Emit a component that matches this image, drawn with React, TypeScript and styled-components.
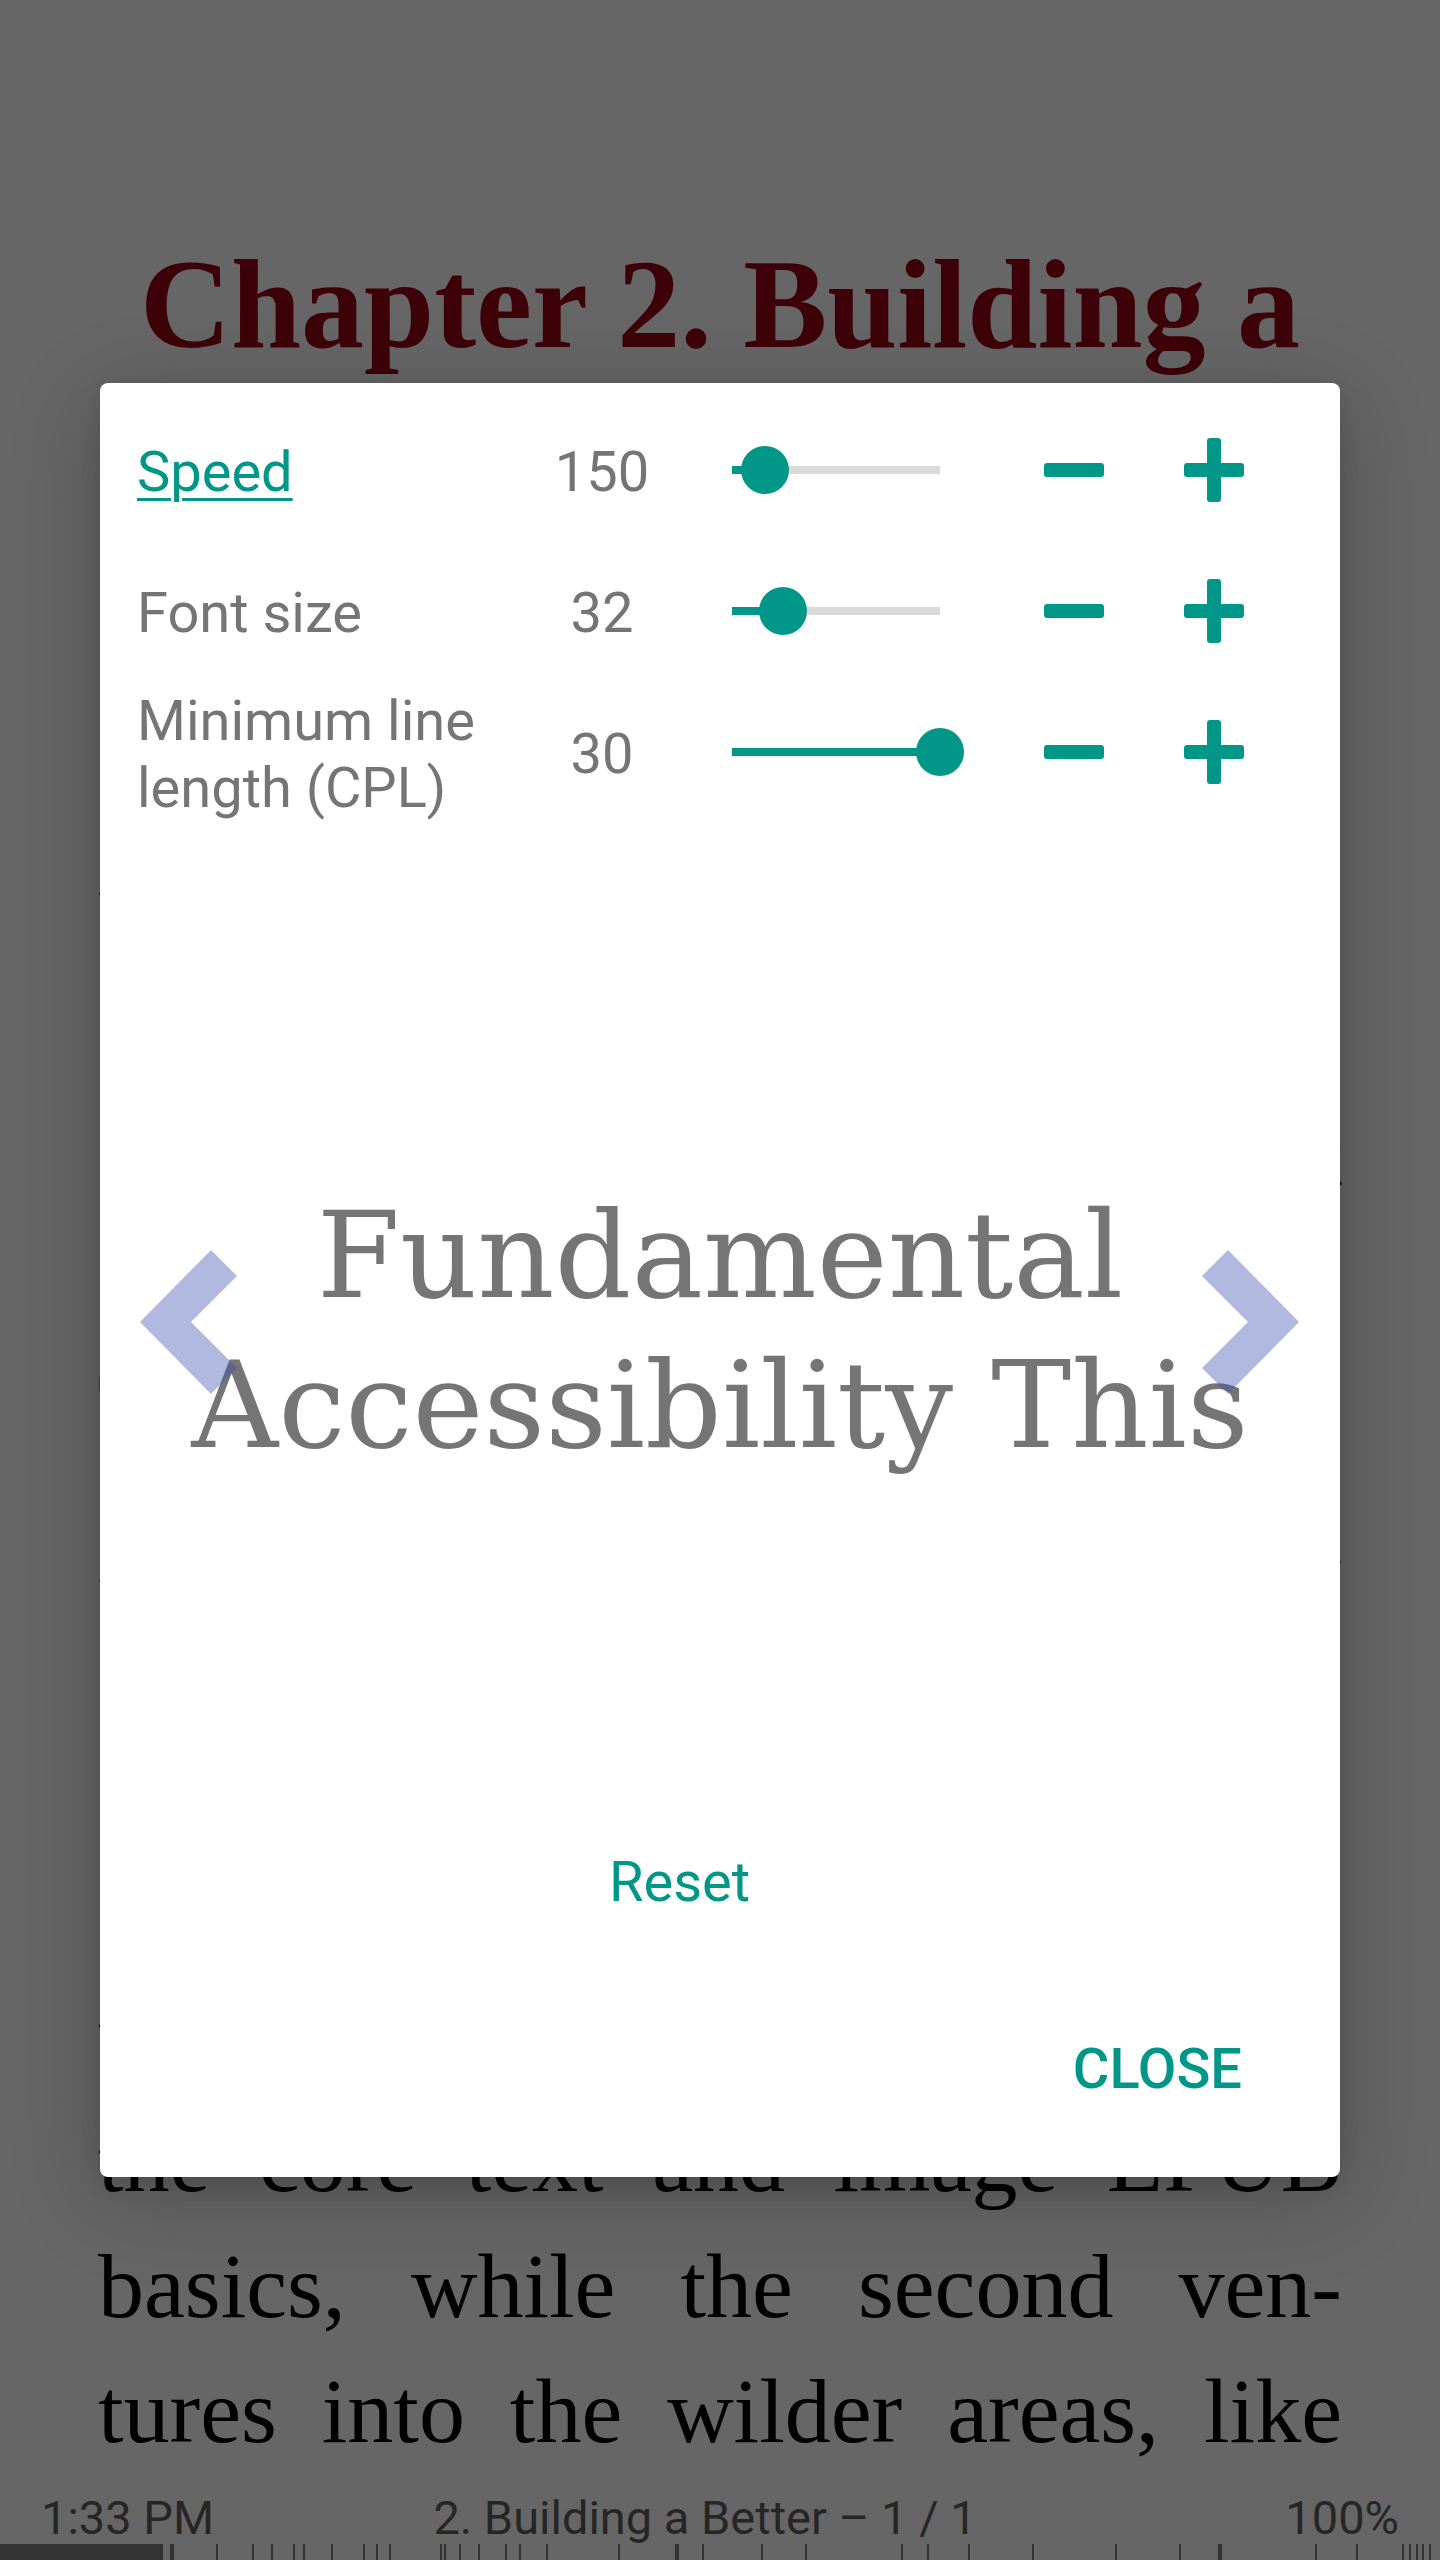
import React from "react";
import styled, { createGlobalStyle } from "styled-components";

const TEAL = "#009688";
const GRAY = "#757575";

const GlobalStyle = createGlobalStyle`
  html, body {
    margin: 0;
    padding: 0;
    background: #666666;
  }
  * {
    box-sizing: border-box;
  }
`;

const Screen = styled.div`
  position: relative;
  width: 1440px;
  height: 2560px;
  display: flex;
  flex-direction: column;
  background: #666666;
  overflow: hidden;
`;

const Reader = styled.div`
  flex: 1;
  overflow: hidden;
  padding: 230px 98px 0;
  font-family: "Liberation Serif", "Times New Roman", serif;
  color: #000;
`;

const ChapterTitle = styled.h1`
  margin: 0 0 12px;
  font-size: 126px;
  line-height: 150px;
  font-weight: 700;
  text-align: center;
  color: #3d0008;
`;

const Paragraph = styled.div`
  font-size: 92px;
  line-height: 125.6px;
`;

const Line = styled.div`
  white-space: nowrap;
  text-align: justify;
  text-align-last: justify;
`;

const StatusBar = styled.div`
  height: 64px;
  padding: 12px 41px 0;
  display: grid;
  grid-template-columns: 1fr auto 1fr;
  font-family: Roboto, "Noto Sans", sans-serif;
  font-size: 47px;
  line-height: 52px;
  color: #262626;
`;

const StatusText = styled.span<{ $align: "left" | "center" | "right" }>`
  text-align: ${(p) => p.$align};
  margin-right: ${(p) => (p.$align === "center" ? "30px" : "0")};
`;

const ProgressSvg = styled.svg`
  display: block;
  width: 1440px;
  height: 16px;
`;

const Dialog = styled.div`
  position: absolute;
  left: 100px;
  top: 383px;
  width: 1240px;
  height: 1794px;
  background: #ffffff;
  border-radius: 8px;
  box-shadow: 0 20px 90px rgba(0, 0, 0, 0.22), 0 6px 20px rgba(0, 0, 0, 0.12);
  display: flex;
  flex-direction: column;
  font-family: Roboto, "Noto Sans", sans-serif;
`;

const Settings = styled.div`
  padding: 16px 0 0 37px;
`;

const SettingRow = styled.div`
  height: 141px;
  display: grid;
  grid-template-columns: 390px 150px 327px 140px 140px;
  align-items: center;
`;

const Label = styled.span<{ $link?: boolean }>`
  margin-top: 6px;
  font-size: 56px;
  line-height: 67px;
  color: ${(p) => (p.$link ? TEAL : GRAY)};
  text-decoration: ${(p) => (p.$link ? "underline" : "none")};
  text-decoration-thickness: 3px;
  text-underline-offset: 7px;
`;

const Value = styled.span`
  margin-top: 6px;
  font-size: 56px;
  line-height: 67px;
  color: ${GRAY};
  text-align: center;
`;

const SliderCell = styled.div`
  padding-left: 55px;
  display: flex;
  align-items: center;
`;

const Track = styled.div`
  position: relative;
  width: 208px;
  height: 8px;
  background: #dadada;
`;

const ActiveTrack = styled.div`
  position: absolute;
  left: 0;
  top: 0;
  bottom: 0;
  background: ${TEAL};
`;

const Thumb = styled.div`
  position: absolute;
  top: 50%;
  width: 48px;
  height: 48px;
  margin: -24px 0 0 -24px;
  border-radius: 50%;
  background: ${TEAL};
`;

const IconButton = styled.div`
  display: flex;
  justify-content: center;
  align-items: center;
  height: 100px;
`;

const Stage = styled.div`
  position: relative;
  height: 1027px;
  padding-top: 359px;
  display: flex;
  justify-content: center;
  align-items: flex-start;
`;

const Words = styled.div`
  max-width: 1120px;
  font-family: "DejaVu Serif", "Liberation Serif", serif;
  font-size: 120px;
  line-height: 150px;
  color: ${GRAY};
  text-align: center;
`;

const Chevron = styled.svg<{ $side: "left" | "right" }>`
  position: absolute;
  top: 428px;
  ${(p) => (p.$side === "left" ? "left: 40px;" : "left: 1102px;")}
  width: 97px;
  height: 144px;
`;

const ResetRow = styled.div`
  padding: 0 118px 0 37px;
  text-align: center;
`;

const TextButton = styled.span<{ $strong?: boolean }>`
  font-size: 56px;
  line-height: 67px;
  color: ${TEAL};
  font-weight: ${(p) => (p.$strong ? 500 : 400)};
  text-transform: ${(p) => (p.$strong ? "uppercase" : "none")};
`;

const Actions = styled.div`
  margin-top: 120px;
  padding-right: 98px;
  display: flex;
  justify-content: flex-end;
`;

const Minus = () => (
  <svg width="60" height="60" viewBox="0 0 60 60">
    <rect x="0" y="23" width="60" height="14" rx="3" fill={TEAL} />
  </svg>
);

const Plus = () => (
  <svg width="60" height="64" viewBox="0 0 60 64">
    <rect x="0" y="25" width="60" height="14" rx="3" fill={TEAL} />
    <rect x="23" y="0" width="14" height="64" rx="3" fill={TEAL} />
  </svg>
);

interface SliderProps {
  ratio: number;
}

const Slider = ({ ratio }: SliderProps) => (
  <SliderCell>
    <Track>
      <ActiveTrack style={{ width: `${ratio * 100}%` }} />
      <Thumb style={{ left: `${ratio * 100}%` }} />
    </Track>
  </SliderCell>
);

const settings = [
  { label: "Speed", value: "150", ratio: 33 / 208, link: true },
  { label: "Font size", value: "32", ratio: 51 / 208, link: false },
  { label: "Minimum line length (CPL)", value: "30", ratio: 1, link: false },
];

const pageLines = [
  "you already know that the EPUB",
  "format is built on the open web,",
  "and that making your content",
  "accessible begins with markup.",
  "This chapter looks at the core",
  "principles you need to keep in",
  "mind while you build your book.",
  "It is broken into two sections,",
  "each building on the last one:",
  "the first section focuses on all",
  "the core text and image EPUB",
  "basics, while the second ven-",
  "tures into the wilder areas, like",
];

const ticks: [number, number][] = [
  [170, 4], [216, 2], [252, 2], [271, 2], [293, 2], [303, 2], [331, 2],
  [363, 2], [376, 2], [389, 2], [440, 2], [444, 2], [459, 2], [478, 2],
  [505, 2], [519, 2], [546, 2], [618, 2], [675, 4], [702, 2], [761, 2],
  [805, 2], [901, 2], [927, 2], [968, 2], [1032, 2], [1115, 2], [1179, 2],
  [1218, 4], [1315, 2], [1356, 2], [1402, 2], [1409, 2], [1416, 2],
  [1422, 2], [1429, 2],
];

const App = () => {
  return (
    <>
      <GlobalStyle />
      <Screen>
        <Reader>
          <ChapterTitle>
            Chapter 2. Building a Better EPUB: Fundamental Accessibility
          </ChapterTitle>
          <Paragraph>
            {pageLines.map((l, i) => (
              <Line key={i}>{l}</Line>
            ))}
          </Paragraph>
        </Reader>

        <StatusBar>
          <StatusText $align="left">1:33 PM</StatusText>
          <StatusText $align="center">2. Building a Better – 1 / 1</StatusText>
          <StatusText $align="right">100%</StatusText>
        </StatusBar>
        <ProgressSvg viewBox="0 0 1440 16">
          <rect x="0" y="0" width="163" height="16" fill="#333333" />
          {ticks.map(([x, w], i) => (
            <rect key={i} x={x} y="0" width={w} height="16" fill="#333333" />
          ))}
        </ProgressSvg>

        <Dialog>
          <Settings>
            {settings.map((s) => (
              <SettingRow key={s.label}>
                <Label $link={s.link}>{s.label}</Label>
                <Value>{s.value}</Value>
                <Slider ratio={s.ratio} />
                <IconButton>
                  <Minus />
                </IconButton>
                <IconButton>
                  <Plus />
                </IconButton>
              </SettingRow>
            ))}
          </Settings>

          <Stage>
            <Words>Fundamental Accessibility This</Words>
            <Chevron $side="left" viewBox="0 0 97 144">
              <polygon
                points="0,72 71,0 97,26 51,72 97,118 71,144"
                fill="rgba(63,81,181,0.4)"
              />
            </Chevron>
            <Chevron $side="right" viewBox="0 0 97 144">
              <polygon
                points="97,72 26,0 0,26 46,72 0,118 26,144"
                fill="rgba(63,81,181,0.4)"
              />
            </Chevron>
          </Stage>

          <ResetRow>
            <TextButton>Reset</TextButton>
          </ResetRow>
          <Actions>
            <TextButton $strong>Close</TextButton>
          </Actions>
        </Dialog>
      </Screen>
    </>
  );
};

export default App;
